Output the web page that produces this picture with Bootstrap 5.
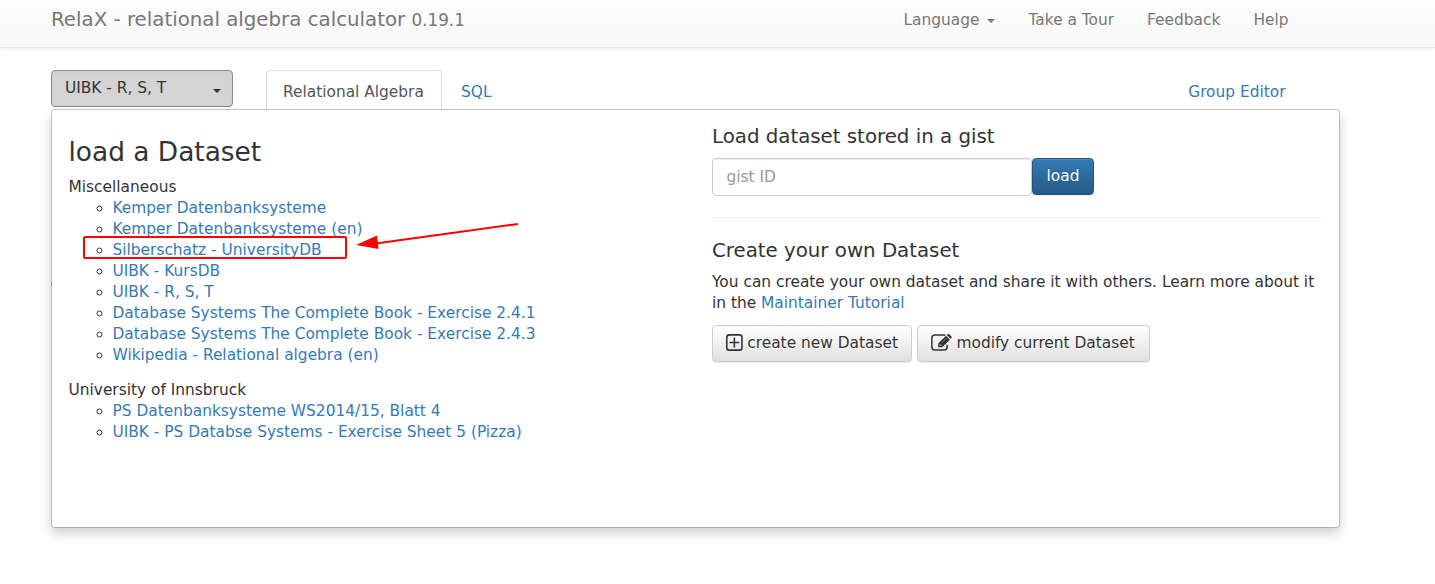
<!DOCTYPE html>
<html lang="en">
<head>
<meta charset="utf-8">
<meta name="viewport" content="width=device-width, initial-scale=1">
<title>RelaX - relational algebra calculator</title>
<link rel="stylesheet" href="https://cdn.jsdelivr.net/npm/bootstrap@5.3.0/dist/css/bootstrap.min.css">
<style>
body{font-family:"DejaVu Sans",sans-serif;font-size:15.4px;line-height:21px;color:#333;background:#fff;min-height:584px}
a{color:#337ab7;text-decoration:none}
.top-bar{height:48px;padding:0 146.5px 8px 51px;background:linear-gradient(#fdfdfd,#f8f8f8);border-bottom:1px solid #e7e7e7;box-shadow:0 1px 5px rgba(0,0,0,.075);text-shadow:0 1px 0 rgba(255,255,255,.25)}
.top-bar a{color:#777}
.brand-text{font-size:19.8px}
.brand-text span{font-size:16.8px}
.top-links{gap:33px;padding-top:2px}
.caret-mark{display:inline-block;border:4.4px solid transparent;border-top-color:currentColor;border-bottom:0;vertical-align:middle}
.work-area{margin-left:51px;width:1289px;padding-top:22px}
.dataset-btn{width:182px;height:37px;padding:0 11px 0 13px;font-size:15.4px;color:#333;background:#d4d4d4!important;border:1px solid #8c8c8c!important;border-radius:4px;box-shadow:inset 0 3px 5px rgba(0,0,0,.025)}
.tab-row{height:39px}
.tab-on{margin-left:33px;width:176px;height:40px;padding:11px 0 0 16px;border:1px solid #ddd;border-bottom:0;border-radius:4px 4px 0 0;color:#555}
.tab-off{padding-top:12px}
.tab-sql{margin-left:19px}
.group-link{margin-right:54.5px}
.data-panel{height:419px;border:1px solid rgba(0,0,0,.2);border-radius:4px;background:#fff;background-clip:padding-box;box-shadow:0 6px 12px rgba(0,0,0,.175)}
.pane-left{width:643px;padding:26px 0 0 16.5px}
.pane-right{width:628px;padding:16px 0 0 17px}
.pane-left h3{font-size:26.4px;line-height:31px;margin:0 0 10px;font-weight:400}
.pane-right h4{font-size:19.8px;line-height:21px;margin:0 0 11px;font-weight:400}
.set-list{list-style:circle;margin:0 0 14px;padding-left:44px}
.gist-in{width:320px;height:38px;padding:6px 13.5px;font-size:15.4px;border:1px solid #ccc;border-radius:4px;box-shadow:inset 0 1px 1px rgba(0,0,0,.075)}
.gist-in::placeholder{color:#999}
.btn-grad{height:37px;padding:0 13px;font-size:15.4px;border-radius:4px;text-shadow:0 1px 0 #fff;color:#333;border:1px solid #ccc;background:linear-gradient(#fff,#e0e0e0);box-shadow:inset 0 1px 0 rgba(255,255,255,.15),0 1px 1px rgba(0,0,0,.075)}
.btn-load{width:62px;color:#fff;text-shadow:0 -1px 0 rgba(0,0,0,.2);border-color:#245580;background:linear-gradient(#337ab7,#265a88)}
.btn-grad svg{margin:0 4.5px 2px 0}
.btn-pair{gap:5px}
.new-btn{width:200px}
.edit-btn{width:233px}
.own-text{margin:0 0 11px}
.split{height:1px;background:#eee;margin:21px 0 22px;width:611px}
.target-box{left:31px;top:126px;width:264px;height:23px;border:2px solid red;border-radius:2px}
.target-arrow{left:300px;top:108px}
.edge-dot{left:-1px;top:173px;width:1px;height:1px;background:#333}
</style>
<script src="https://cdn.jsdelivr.net/npm/bootstrap@5.3.0/dist/js/bootstrap.bundle.min.js"></script>
</head>
<body>
<nav class="top-bar d-flex align-items-center justify-content-between">
  <a href="#" class="brand-text">RelaX - relational algebra calculator <span>0.19.1</span></a>
  <div class="top-links d-flex">
    <a href="#">Language<i class="caret-mark ms-2"></i></a>
    <a href="#">Take a Tour</a>
    <a href="#">Feedback</a>
    <a href="#">Help</a>
  </div>
</nav>
<main class="work-area">
  <div class="tab-row d-flex">
    <button class="dataset-btn btn d-flex align-items-center justify-content-between">UIBK - R, S, T <i class="caret-mark mt-1"></i></button>
    <a href="#" class="tab-on">Relational Algebra</a>
    <a href="#" class="tab-off tab-sql">SQL</a>
    <a href="#" class="tab-off ms-auto group-link">Group Editor</a>
  </div>
  <div class="data-panel position-relative d-flex">
    <section class="pane-left">
      <h3>load a Dataset</h3>
      <div>Miscellaneous</div>
      <ul class="set-list">
        <li><a href="#">Kemper Datenbanksysteme</a></li>
        <li><a href="#">Kemper Datenbanksysteme (en)</a></li>
        <li><a href="#">Silberschatz - UniversityDB</a></li>
        <li><a href="#">UIBK - KursDB</a></li>
        <li><a href="#">UIBK - R, S, T</a></li>
        <li><a href="#">Database Systems The Complete Book - Exercise 2.4.1</a></li>
        <li><a href="#">Database Systems The Complete Book - Exercise 2.4.3</a></li>
        <li><a href="#">Wikipedia - Relational algebra (en)</a></li>
      </ul>
      <div>University of Innsbruck</div>
      <ul class="set-list">
        <li><a href="#">PS Datenbanksysteme WS2014/15, Blatt 4</a></li>
        <li><a href="#">UIBK - PS Databse Systems - Exercise Sheet 5 (Pizza)</a></li>
      </ul>
    </section>
    <section class="pane-right">
      <h4>Load dataset stored in a gist</h4>
      <div class="d-flex">
        <input class="gist-in form-control" placeholder="gist ID">
        <button class="btn btn-grad btn-load">load</button>
      </div>
      <div class="split"></div>
      <h4>Create your own Dataset</h4>
      <p class="own-text">You can create your own dataset and share it with others. Learn more about it in the <a href="#">Maintainer Tutorial</a></p>
      <div class="btn-pair d-flex">
        <button class="btn btn-grad new-btn text-nowrap d-flex align-items-center"><svg width="17" height="17" viewBox="0 0 17 17" fill="none" stroke="#333" stroke-width="1.6"><rect x=".8" y=".8" width="15.4" height="15.4" rx="2.5"/><path d="M8.5 3.5v10M3.5 8.5h10"/></svg>create new Dataset</button>
        <button class="btn btn-grad edit-btn text-nowrap d-flex align-items-center"><svg width="21" height="17" viewBox="0 0 21 17"><path d="M14.5 1.3Q14 .9 13 .9H3.8A3 3 0 0 0 .9 3.8v9.3a3 3 0 0 0 2.9 3h9.3a3 3 0 0 0 3-3v-2.4" fill="none" stroke="#333" stroke-width="1.5"/><path d="M7.2 9.6 15 1.8l3.9 3.9-7.6 7.6H7.2zM15.8 1.1l.9-.9q.7-.5 1.5 0l2.3 2.3q.6.7 0 1.4l-.9.9z" fill="#333"/><path d="m8.7 10.2 1.9 1.9" stroke="#f4f4f4" stroke-width="1"/><path d="m11 8.5 4.2-4.2" stroke="#f4f4f4" stroke-width=".4"/></svg>modify current Dataset</button>
      </div>
    </section>
    <div class="target-box position-absolute"></div>
    <svg class="target-arrow position-absolute" width="170" height="40" viewBox="0 0 170 40"><path d="M20 26 166 6" stroke="red" stroke-width="2"/><path d="m4 27 21-9.5 1.5 13.5z" fill="red"/></svg>
    <span class="edge-dot position-absolute"></span>
  </div>
</main>
</body>
</html>
